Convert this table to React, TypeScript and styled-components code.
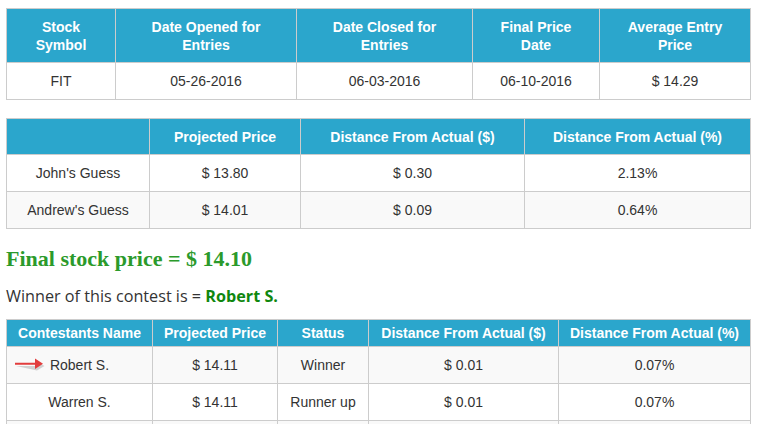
import styled, { createGlobalStyle } from "styled-components";

const GlobalStyle = createGlobalStyle`
  html, body {
    margin: 0;
    padding: 0;
    overflow: hidden;
    background: #fff;
  }
  body {
    font-family: "Liberation Sans", Arial, sans-serif;
    color: #333;
  }
`;

const Page = styled.div`
  width: 744px;
  padding: 8px 6px 0 6px;
`;

const Table = styled.table<{ $gap?: number }>`
  width: 744px;
  border-collapse: collapse;
  table-layout: fixed;
  border: 1px solid #ccc;
  margin-bottom: ${(p) => p.$gap ?? 0}px;
  font-size: 14px;
`;

const Th = styled.th<{ $h: number }>`
  height: ${(p) => p.$h}px;
  padding: 0 8px;
  box-sizing: border-box;
  background: #2ba6cc;
  color: #fff;
  font-weight: bold;
  line-height: 18px;
  text-align: center;
  vertical-align: middle;
  border: 1px solid #ccc;
  border-top: none;
  border-bottom: none;
`;

const Row = styled.tr<{ $shade?: boolean }>`
  background: ${(p) => (p.$shade ? "#f9f9f9" : "#fff")};
`;

const Td = styled.td`
  position: relative;
  height: 37px;
  box-sizing: border-box;
  padding: 0 8px;
  line-height: 20px;
  text-align: center;
  vertical-align: middle;
  border: 1px solid #ccc;
  color: #333;
`;

const Heading = styled.h3`
  margin: 15px 0 11px 0;
  font-family: "Liberation Serif", "Times New Roman", serif;
  font-size: 22px;
  line-height: 30px;
  font-weight: bold;
  color: #2b9a2b;
`;

const WinnerLine = styled.p`
  margin: 0 0 12px 0;
  font-family: "Open Sans", sans-serif;
  font-size: 16.2px;
  line-height: 22px;
  color: #333;
`;

const WinnerName = styled.strong`
  color: #0f870f;
  font-weight: bold;
`;

const ArrowMark = styled.svg`
  position: absolute;
  left: 2px;
  top: 50%;
  margin-top: -8px;
  width: 36px;
  height: 15px;
`;

function Arrow() {
  return (
    <ArrowMark viewBox="0 0 36 15">
      <path d="M7 9 H28 V4.5 L35.5 9 L28 13.5 Z" fill="#000" opacity="0.16" />
      <path d="M6 5.8 H26 V1.5 L34 6.8 L26 12 V7.8 H6 Z" fill="#e23d3d" />
    </ArrowMark>
  );
}

const summaryCols = [109, 181, 176, 127, 151];
const guessCols = [143, 151, 224, 226];
const contestCols = [146, 125, 91, 190, 192];

const guesses = [
  { name: "John's Guess", price: "$ 13.80", dist: "$ 0.30", pct: "2.13%" },
  { name: "Andrew's Guess", price: "$ 14.01", dist: "$ 0.09", pct: "0.64%" },
];

// the third row only peeks in at the bottom edge, so its cells stay empty
const contestants = [
  { name: "Robert S.", price: "$ 14.11", status: "Winner", dist: "$ 0.01", pct: "0.07%", winner: true },
  { name: "Warren S.", price: "$ 14.11", status: "Runner up", dist: "$ 0.01", pct: "0.07%" },
  { name: "", price: "", status: "", dist: "", pct: "" },
];

function Cols({ widths }: { widths: number[] }) {
  return (
    <colgroup>
      {widths.map((w, i) => (
        <col key={i} style={{ width: w }} />
      ))}
    </colgroup>
  );
}

export default function App() {
  return (
    <Page>
      <GlobalStyle />
      <Table $gap={18}>
        <Cols widths={summaryCols} />
        <thead>
          <tr>
            <Th $h={54}>Stock<br />Symbol</Th>
            <Th $h={54}>Date Opened for<br />Entries</Th>
            <Th $h={54}>Date Closed for<br />Entries</Th>
            <Th $h={54}>Final Price<br />Date</Th>
            <Th $h={54}>Average Entry<br />Price</Th>
          </tr>
        </thead>
        <tbody>
          <Row>
            <Td>FIT</Td>
            <Td>05-26-2016</Td>
            <Td>06-03-2016</Td>
            <Td>06-10-2016</Td>
            <Td>$ 14.29</Td>
          </Row>
        </tbody>
      </Table>

      <Table>
        <Cols widths={guessCols} />
        <thead>
          <tr>
            <Th $h={36}></Th>
            <Th $h={36}>Projected Price</Th>
            <Th $h={36}>Distance From Actual ($)</Th>
            <Th $h={36}>Distance From Actual (%)</Th>
          </tr>
        </thead>
        <tbody>
          {guesses.map((g, i) => (
            <Row key={g.name} $shade={i % 2 === 1}>
              <Td>{g.name}</Td>
              <Td>{g.price}</Td>
              <Td>{g.dist}</Td>
              <Td>{g.pct}</Td>
            </Row>
          ))}
        </tbody>
      </Table>

      <Heading>Final stock price = $ 14.10</Heading>
      <WinnerLine>
        Winner of this contest is = <WinnerName>Robert S.</WinnerName>
      </WinnerLine>

      <Table>
        <Cols widths={contestCols} />
        <thead>
          <tr>
            <Th $h={27}>Contestants Name</Th>
            <Th $h={27}>Projected Price</Th>
            <Th $h={27}>Status</Th>
            <Th $h={27}>Distance From Actual ($)</Th>
            <Th $h={27}>Distance From Actual (%)</Th>
          </tr>
        </thead>
        <tbody>
          {contestants.map((c, i) => (
            <Row key={i} $shade={i % 2 === 0}>
              <Td>
                {c.winner && <Arrow />}
                {c.name}
              </Td>
              <Td>{c.price}</Td>
              <Td>{c.status}</Td>
              <Td>{c.dist}</Td>
              <Td>{c.pct}</Td>
            </Row>
          ))}
        </tbody>
      </Table>
    </Page>
  );
}
